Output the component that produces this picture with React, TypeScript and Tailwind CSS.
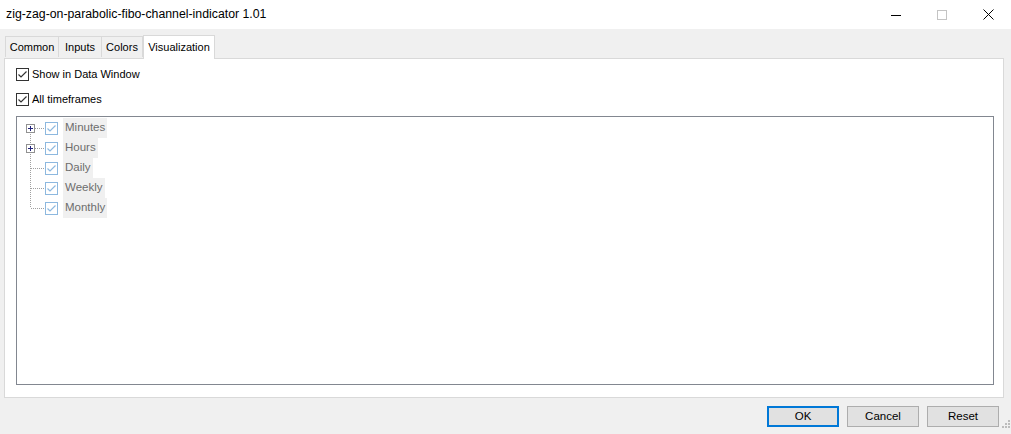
import React from "react";

const font = { fontFamily: '"Liberation Sans", Arial, sans-serif' };

function Check({ light }: { light?: boolean }) {
  return (
    <span
      className={`flex h-[13px] w-[13px] shrink-0 items-center justify-center border bg-white ${
        light ? "border-[#8db8df]" : "border-[#333333]"
      }`}
    >
      <svg width="11" height="11" viewBox="0 0 11 11">
        <path
          d="M1.5 5.5 L4 8 L9.5 2.5"
          fill="none"
          stroke={light ? "#8db8df" : "#333333"}
          strokeWidth="1.2"
        />
      </svg>
    </span>
  );
}

function Plus() {
  return (
    <span className="flex h-[9px] w-[9px] items-center justify-center border border-[#919191] bg-white">
      <svg width="7" height="7" viewBox="0 0 7 7">
        <path d="M1 3.5 H6 M3.5 1 V6" stroke="#23237a" strokeWidth="1" />
      </svg>
    </span>
  );
}

const items = [
  { label: "Minutes", plus: true },
  { label: "Hours", plus: true },
  { label: "Daily", plus: false },
  { label: "Weekly", plus: false },
  { label: "Monthly", plus: false },
];

const tabs = [
  { label: "Common", w: "w-[54px]" },
  { label: "Inputs", w: "w-[43px]" },
  { label: "Colors", w: "w-[41px]" },
];

export default function App() {
  return (
    <div className="h-[434px] w-[1011px] overflow-hidden bg-[#f0f0f0] text-[11px] text-black" style={font}>
      {/* Title bar */}
      <div className="flex h-[29px] items-center bg-white">
        <span className="pl-[6px] text-[12.3px]">zig-zag-on-parabolic-fibo-channel-indicator 1.01</span>
        <div className="ml-auto flex h-full items-center">
          <div className="flex h-full w-[46px] items-center justify-center">
            <svg width="10" height="10" viewBox="0 0 10 10">
              <path d="M0 5.5 H10" stroke="#000" strokeWidth="1" />
            </svg>
          </div>
          <div className="flex h-full w-[46px] items-center justify-center">
            <svg width="10" height="10" viewBox="0 0 10 10">
              <rect x="0.5" y="0.5" width="9" height="9" fill="none" stroke="#c4c4c4" />
            </svg>
          </div>
          <div className="flex h-full w-[46px] items-center justify-center">
            <svg width="11" height="11" viewBox="0 0 11 11">
              <path d="M0.5 0.5 L10.5 10.5 M10.5 0.5 L0.5 10.5" stroke="#000" strokeWidth="1" />
            </svg>
          </div>
        </div>
      </div>

      {/* Tabs */}
      <div className="flex h-[29px] items-end pl-[5px]">
        {tabs.map((t, i) => (
          <div
            key={t.label}
            className={`mb-px flex h-[21px] items-center justify-center border-t border-r border-[#d9d9d9] ${t.w} ${
              i === 0 ? "border-l" : ""
            }`}
          >
            {t.label}
          </div>
        ))}
        <div className="relative z-10 -mb-px flex h-[24px] w-[72px] items-start justify-center border border-b-0 border-[#d9d9d9] bg-white pt-[3px]">
          Visualization
        </div>
      </div>

      {/* Panel */}
      <div className="mx-[4px] h-[340px] w-[1000px] border border-[#d9d9d9] bg-white pl-[11px] pt-[9px]">
        <div className="flex h-[13px] items-center gap-[3px]">
          <Check />
          <span>Show in Data Window</span>
        </div>
        <div className="mt-[12px] flex h-[13px] items-center gap-[3px]">
          <Check />
          <span>All timeframes</span>
        </div>
        <div className="relative mt-[10px] h-[269px] w-[978px] border border-[#828790] bg-white pt-[1px]">
          <svg className="absolute left-[13px] top-[11px]" width="18" height="82" viewBox="0 0 18 82">
            <path d="M0.5 4 V80" stroke="#a0a0a0" strokeDasharray="1 1" />
            {[0, 20, 40, 60, 80].map((y) => (
              <path key={y} d={`M${y < 40 ? 5 : 1} ${y + 0.5} H16`} stroke="#a0a0a0" strokeDasharray="1 1" />
            ))}
          </svg>
          {items.map((it) => (
            <div key={it.label} className="relative flex h-[20px] items-center">
              <div className="flex w-[28px] justify-end pr-[10px]">
                {it.plus ? <Plus /> : <span className="w-[9px]" />}
              </div>
              <Check light />
              <span className="ml-[5px] flex h-[20px] items-center bg-[#f0f0f0] px-[2px] text-[11.5px] text-[#6d6d6d]">
                {it.label}
              </span>
            </div>
          ))}
        </div>
      </div>

      {/* Footer */}
      <div className="relative flex justify-end gap-[8px] pr-[12px] pt-[8px]">
        <button className="h-[21px] w-[72px] border-2 border-[#0078d7] bg-[#e1e1e1] text-[11.5px]">OK</button>
        <button className="h-[21px] w-[72px] border border-[#adadad] bg-[#e1e1e1] text-[11.5px]">Cancel</button>
        <button className="h-[21px] w-[72px] border border-[#adadad] bg-[#e1e1e1] text-[11.5px]">Reset</button>
        <svg className="absolute right-[1px] top-[20px]" width="10" height="10" viewBox="0 0 10 10">
          {[
            [8, 2],
            [5, 5],
            [8, 5],
            [2, 8],
            [5, 8],
            [8, 8],
          ].map(([x, y]) => (
            <rect key={`${x}-${y}`} x={x} y={y} width="2" height="2" fill="#bcbcbc" />
          ))}
        </svg>
      </div>
    </div>
  );
}
